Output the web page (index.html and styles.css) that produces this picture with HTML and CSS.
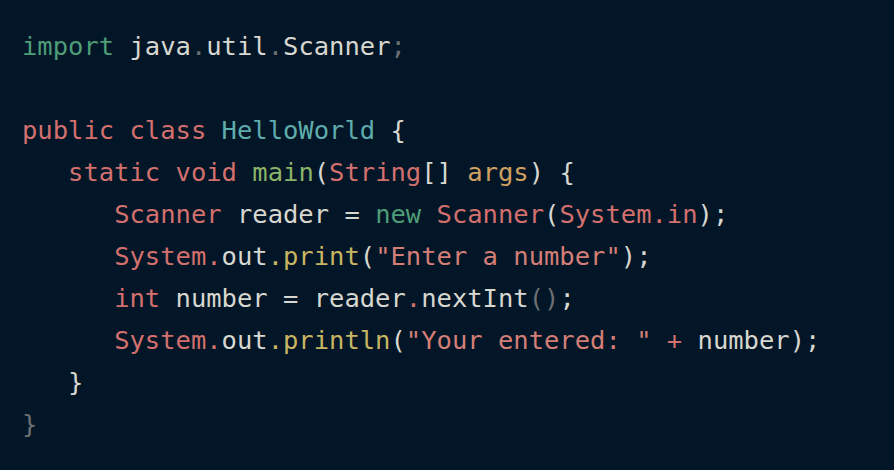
FILE: index.html
```html
<!DOCTYPE html>
<html>
<head>
<meta charset="utf-8">
<link rel="stylesheet" href="styles.css">
</head>
<body>
<pre class="code"><code><span class="kw2">import</span> java<span class="dim">.</span>util<span class="dim">.</span>Scanner<span class="dim">;</span>

<span class="kw">public</span> <span class="kw">class</span> <span class="cls">HelloWorld</span> {
   <span class="kw">static</span> <span class="kw">void</span> <span class="fn">main</span>(<span class="kw">String</span>[] <span class="arg">args</span>) {
      <span class="kw">Scanner</span> reader = <span class="kw2">new</span> <span class="kw">Scanner</span>(<span class="kw">System.in</span>);
      <span class="kw">System.</span>out<span class="mth">.print</span>(<span class="str">"Enter a number"</span>);
      <span class="kw">int</span> number = reader<span class="kw">.</span>nextInt<span class="dim">()</span>;
      <span class="kw">System.</span>out<span class="mth">.println</span>(<span class="str">"Your entered: "</span> <span class="kw">+</span> number);
   }
<span class="dim">}</span></code></pre>
</body>
</html>
```
FILE: styles.css
```css
html, body {
  margin: 0;
  background: #021627;
  height: 100%;
}
.code {
  margin: 0;
  padding: 25px 22px;
  font-family: "DejaVu Sans Mono", monospace;
  font-size: 25.5px;
  line-height: 42px;
  color: #d8d7d0;
  background: #021627;
}
.kw { color: #d3706e; }
.kw2 { color: #4f9c78; }
.cls { color: #5eacab; }
.fn { color: #8cb468; }
.arg { color: #d0a062; }
.mth { color: #c8b562; }
.str { color: #d57e76; }
.dim { color: #6b6f72; }
```
